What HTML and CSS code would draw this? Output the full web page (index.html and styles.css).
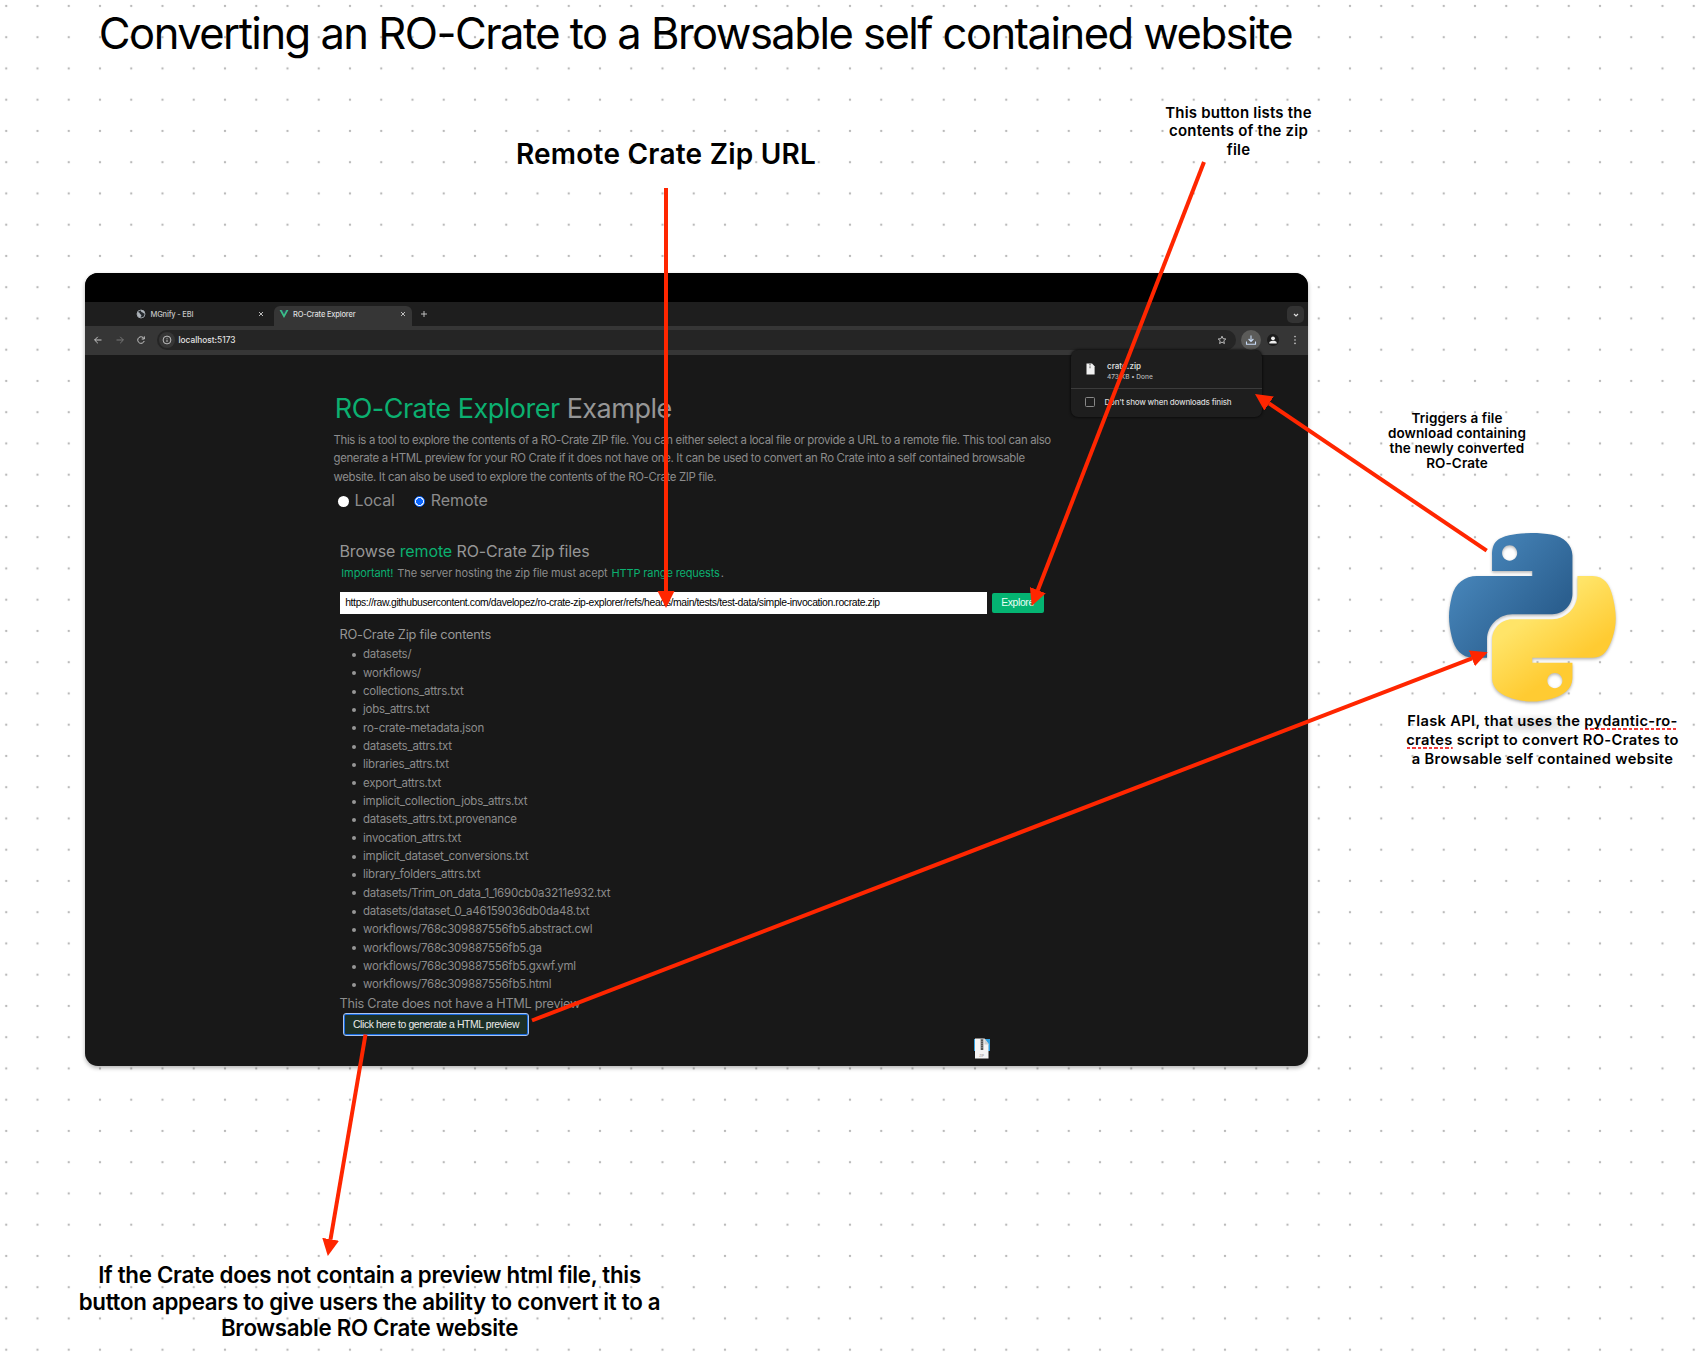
FILE: index.html
```html
<!DOCTYPE html>
<html lang="en">
<head>
<meta charset="utf-8">
<title>Converting an RO-Crate to a Browsable self contained website</title>
<link rel="stylesheet" href="styles.css">
</head>
<body>
<main class="board">
  <h1 class="note title">Converting an RO-Crate to a Browsable self contained website</h1>
  <p class="note note-url">Remote Crate Zip URL</p>
  <p class="note note-list">This button lists the<br>contents of the zip<br>file</p>
  <p class="note note-download">Triggers a file<br>download containing<br>the newly converted<br>RO-Crate</p>

  <section class="window">
    <div class="menubar"></div>
    <div class="tabs">
      <div class="tab">
        <svg class="tab-icon" viewBox="0 0 10 10"><circle cx="5" cy="5" r="4" fill="#25292d" stroke="#aeb4ba" stroke-width=".8"/><path d="M1.200 3.600C2.200 2.800 3.600 3.400 3.800 4.400S5.600 5.200 5.400 6.600 4.200 7.600 4.400 8.900C2.400 8.800.8 6.400 1.200 3.600ZM5.200 1.100C4.400 2 5 3 6 3.200S7.600 4.600 8.900 4.600C8.800 2.600 7.200 1 5.200 1.100Z" fill="#aeb4ba"/></svg>
        <span class="tab-name">MGnify - EBI</span>
        <svg class="close" viewBox="0 0 6 6"><path d="M1 1l4 4M5 1l-4 4"/></svg>
      </div>
      <div class="tab active">
        <svg class="tab-icon" viewBox="0 0 10 10"><path d="M.6 1H4L5 2.700 6 1h3.400L5 9Z" fill="#34495e"/><path d="M.6 1h1.900L5 5.500 7.500 1h1.900L5 9Z" fill="#3cbf85"/></svg>
        <span class="tab-name">RO-Crate Explorer</span>
        <svg class="close" viewBox="0 0 6 6"><path d="M1 1l4 4M5 1l-4 4"/></svg>
      </div>
      <svg class="plus" viewBox="0 0 8 8"><path d="M4 1v6M1 4h6"/></svg>
      <div class="tab-search"><svg viewBox="0 0 8 8"><path d="M2 3l2 2 2-2"/></svg></div>
    </div>
    <div class="toolbar">
      <svg class="nav" viewBox="0 0 10 10"><path d="M8.500 5H1.700M4.800 1.800L1.600 5l3.200 3.200"/></svg>
      <svg class="nav dim" viewBox="0 0 10 10"><path d="M1.500 5h6.800M5.200 1.800L8.400 5 5.200 8.200"/></svg>
      <svg class="nav" viewBox="0 0 10 10"><path d="M8 3.600A3.300 3.300 0 1 0 8.200 6M8.300 1.400v2.600H5.700"/></svg>
      <div class="omnibox">
        <span class="site-info"><svg viewBox="0 0 10 10"><circle cx="5" cy="5" r="3.900"/><path d="M5 4.700v2.300M5 2.900v.9"/></svg></span>
        <span class="address">localhost:5173</span>
        <svg class="star" viewBox="0 0 10 10"><path d="M5 1.200l1.100 2.500 2.700.3-2 1.800.6 2.700L5 7.100 2.600 8.500l.6-2.700-2-1.800 2.700-.3Z"/></svg>
      </div>
      <span class="download"><svg viewBox="0 0 12 12"><path d="M6 1.500v5.700M3.600 5L6 7.400 8.400 5M1.500 7.500v2.700h9V7.500"/></svg></span>
      <svg class="avatar" viewBox="0 0 12 12"><circle cx="6" cy="6" r="6" fill="#1c1c1c"/><circle cx="6" cy="4.300" r="1.900" fill="#eee"/><path d="M2.300 9.600V8.700C2.300 6.200 9.700 6.200 9.700 8.700v.9Z" fill="#eee"/></svg>
      <svg class="menu" viewBox="0 0 4 10"><circle cx="2" cy="1.600" r=".8"/><circle cx="2" cy="5" r=".8"/><circle cx="2" cy="8.400" r=".8"/></svg>
    </div>

    <div class="page">
      <h2 class="heading"><span class="green">RO-Crate Explorer</span> Example</h2>
      <p class="intro">This is a tool to explore the contents of a RO-Crate ZIP file. You can either select a local file or provide a URL to a remote file. This tool can also<br>generate a HTML preview for your RO Crate if it does not have one. It can be used to convert an Ro Crate into a self contained browsable<br>website. It can also be used to explore the contents of the RO-Crate ZIP file.</p>
      <div class="modes">
        <span class="radio"></span><span class="mode-name">Local</span>
        <span class="radio checked"></span><span class="mode-name">Remote</span>
      </div>
      <div class="remote">
        <h3 class="browse">Browse <b class="green">remote</b> RO-Crate Zip files</h3>
        <p class="hint"><b class="green">Important!</b> The server hosting the zip file must acept <b class="green">HTTP range requests</b>.</p>
        <div class="url-row">
          <div class="url">https://raw.githubusercontent.com/davelopez/ro-crate-zip-explorer/refs/heads/main/tests/test-data/simple-invocation.rocrate.zip</div>
          <div class="explore">Explore</div>
        </div>
        <h4 class="contents">RO-Crate Zip file contents</h4>
        <ul class="files">
          <li>datasets/</li>
          <li>workflows/</li>
          <li>collections_attrs.txt</li>
          <li>jobs_attrs.txt</li>
          <li>ro-crate-metadata.json</li>
          <li>datasets_attrs.txt</li>
          <li>libraries_attrs.txt</li>
          <li>export_attrs.txt</li>
          <li>implicit_collection_jobs_attrs.txt</li>
          <li>datasets_attrs.txt.provenance</li>
          <li>invocation_attrs.txt</li>
          <li>implicit_dataset_conversions.txt</li>
          <li>library_folders_attrs.txt</li>
          <li>datasets/Trim_on_data_1_1690cb0a3211e932.txt</li>
          <li>datasets/dataset_0_a46159036db0da48.txt</li>
          <li>workflows/768c309887556fb5.abstract.cwl</li>
          <li>workflows/768c309887556fb5.ga</li>
          <li>workflows/768c309887556fb5.gxwf.yml</li>
          <li>workflows/768c309887556fb5.html</li>
        </ul>
        <p class="no-preview">This Crate does not have a HTML preview</p>
        <div class="generate">Click here to generate a HTML preview</div>
      </div>
    </div>

    <aside class="downloads">
      <div class="download-item">
        <svg class="file-icon" viewBox="0 0 9 12"><path d="M.5.500H6L8.600 3.200V11.500H.5Z" fill="#f1f1f1"/><path d="M4 1v4.500" stroke="#444" stroke-width="1" stroke-dasharray="1 .6"/></svg>
        <div><div class="file-name">crate.zip</div><div class="file-size">473 KB • Done</div></div>
      </div>
      <div class="download-option"><span class="checkbox"></span>Don't show when downloads finish</div>
    </aside>
    <svg class="zip-file" viewBox="0 0 16 21"><path d="M0 1h16v12H0Z" fill="#2f9fe0"/><path d="M1 .5h9.500l4 5.500V20.500H1Z" fill="#f4f4f4"/><path d="M10.500.500v6h4.500Z" fill="#cfcfcf"/><path d="M8 1v11" stroke="#555" stroke-width="2.600"/><path d="M8 1v9" stroke="#aaa" stroke-width="1" stroke-dasharray="1 1"/><text x="5.300" y="18.500" class="zip-label">ZIP</text></svg>
  </section>

  <figure class="python">
    <svg viewBox="0 0 112 128" width="168" height="192">
      <defs>
        <linearGradient id="blue" gradientUnits="userSpaceOnUse" x1="8" y1="8" x2="67" y2="58"><stop offset="0" stop-color="#4b8bc0"/><stop offset="1" stop-color="#2b5f8f"/></linearGradient>
        <linearGradient id="yellow" gradientUnits="userSpaceOnUse" x1="56" y1="54" x2="80" y2="88"><stop offset="0" stop-color="#ffe468"/><stop offset="1" stop-color="#ffcb32"/></linearGradient>
        <radialGradient id="shade"><stop offset="0" stop-color="#000" stop-opacity=".16"/><stop offset="1" stop-color="#000" stop-opacity="0"/></radialGradient>
      </defs>
      <ellipse cx="56" cy="127.500" rx="36" ry="7" fill="url(#shade)"/>
      <g class="snakes">
      <path fill="url(#blue)" d="M54.919 0C50.335.021 45.958.412 42.106 1.094C30.760 3.098 28.700 7.294 28.700 15.031V25.250H55.513V28.656H18.638C10.845 28.656 4.021 33.340 1.888 42.250C-.574 52.460-.683 58.831 1.888 69.500C3.793 77.436 8.343 83.094 16.138 83.094H25.356V70.844C25.356 61.994 33.013 54.188 42.106 54.188H68.888C76.343 54.188 82.294 48.049 82.294 40.563V15.031C82.294 7.765 76.164 2.307 68.888 1.094C64.282.327 59.502-.021 54.919 0ZM40.419 8.219C43.188 8.219 45.450 10.517 45.450 13.344C45.450 16.160 43.188 18.438 40.419 18.438C37.639 18.438 35.388 16.160 35.388 13.344C35.388 10.517 37.639 8.219 40.419 8.219Z"/>
      <path fill="url(#yellow)" d="M85.638 28.656V40.563C85.638 49.793 77.811 57.563 68.888 57.563H42.106C34.770 57.563 28.700 63.841 28.700 71.188V96.719C28.700 103.985 35.018 108.258 42.106 110.344C50.594 112.840 58.733 113.291 68.888 110.344C75.637 108.389 82.294 104.456 82.294 96.719V86.500H55.513V83.094H95.700C103.492 83.094 106.396 77.658 109.106 69.500C111.905 61.100 111.786 53.023 109.106 42.250C107.180 34.493 103.502 28.656 95.700 28.656ZM70.575 93.313C73.354 93.313 75.606 95.590 75.606 98.406C75.606 101.233 73.354 103.531 70.575 103.531C67.805 103.531 65.544 101.233 65.544 98.406C65.544 95.590 67.805 93.313 70.575 93.313Z"/>
      </g>
    </svg>
  </figure>
  <p class="note note-flask">Flask API, that uses the <u>pydantic-ro-</u><br><u>crates</u> script to convert RO-Crates to<br>a Browsable self contained website</p>
  <p class="note note-preview">If the Crate does not contain a preview html file, this<br>button appears to give users the ability to convert it to a<br>Browsable RO Crate website</p>

  <svg class="arrows" viewBox="0 0 1698 1352">
    <defs><marker id="head" markerUnits="userSpaceOnUse" markerWidth="18" markerHeight="18" refX="17" refY="8.500" orient="auto"><path d="M0 0L17 8.500 0 17Z" fill="#ff2600"/></marker></defs>
    <g class="shafts"><path d="M666 188V591"/><path d="M1204 162L1037.700 590.500"/><path d="M1486.700 550.700L1269 403.400"/><path d="M532 1020.500L1472 658.300"/><path d="M365.500 1034.500L330.500 1239.500"/></g>
    <g class="heads"><path d="M666 188V608"/><path d="M1204 162L1031.700 606"/><path d="M1486.700 550.700L1255 394"/><path d="M532 1020.500L1487.700 652.300"/><path d="M365.500 1034.500L327.800 1256"/></g>
  </svg>
</main>
</body>
</html>
```
FILE: styles.css
```css
* { box-sizing: border-box; }
body { margin: 0; font-family: Inter, sans-serif; color: #000; }
h1, h2, h3, h4, p, ul, figure { margin: 0; padding: 0; font-weight: 400; }
b { font-weight: inherit; }
svg { display: block; }

.board {
  position: relative;
  width: 1698px;
  height: 1352px;
  overflow: hidden;
  background: #fff radial-gradient(circle, #b4b4b4 0, #bcbcbc .9px, transparent 1.600px) -9.400px -9.700px / 31.250px 31.250px;
}

/* free-standing labels on the canvas */
.note { position: absolute; text-align: center; white-space: nowrap; font-weight: 600; transform: translateX(-50%); }
.title { left: 695.500px; top: 3px; font-size: 43.500px; line-height: 60px; font-weight: 400; letter-spacing: -1.520px; }
.note-url { left: 666px; top: 134px; font-size: 28px; line-height: 40px; letter-spacing: .230px; }
.note-list { left: 1238.500px; top: 103.500px; font-size: 15px; line-height: 18.600px; letter-spacing: .200px; }
.note-download { left: 1457px; top: 411px; font-size: 13.500px; line-height: 15px; letter-spacing: .080px; }
.note-flask { left: 1542.500px; top: 712.400px; font-size: 14.700px; line-height: 19px; letter-spacing: .320px; }
.note-preview { left: 369.500px; top: 1262.400px; font-size: 22.300px; line-height: 26.400px; letter-spacing: -.290px; }
.note-flask u { text-decoration: none; background: repeating-linear-gradient(90deg, #f23b3b 0 3.700px, transparent 3.700px 5.500px) 0 100% / 100% 2px no-repeat; }

.window {
  position: absolute;
  left: 85px;
  top: 273px;
  width: 1223px;
  height: 793px;
  border-radius: 13px;
  overflow: hidden;
  background: #181818;
  color: #969696;
  box-shadow: 0 2px 4px rgba(0, 0, 0, .3);
}
.menubar { height: 29px; background: #000; }
.tabs { display: flex; height: 24px; background: #1e1e1e; color: #c4c4c4; font-size: 7.500px; letter-spacing: -.180px; align-items: flex-end; padding-left: 42px; }
.tab { display: flex; align-items: center; width: 147px; height: 20px; padding: 0 10.500px 3.500px 9px; }
.tab.active { width: 138px; padding: 0 6.300px 3.500px 4.500px; border-radius: 6px 6px 0 0; background: #363636; color: #dedede; }
.tab-icon { width: 10px; height: 10px; margin-right: 4.500px; }
.tab-name { flex: 1; font-weight: 500; }
.close { width: 6px; height: 6px; stroke: #ccc; stroke-width: .9; fill: none; }
.plus { width: 8px; height: 8px; margin: 0 0 8px 8px; stroke: #ccc; stroke-width: .9; }
.tab-search { width: 17px; height: 17px; margin: 0 4px 3px auto; border-radius: 5px; background: #333; display: grid; place-items: center; }
.tab-search svg { width: 8px; stroke: #ddd; fill: none; stroke-width: 1.200; }

.toolbar { display: flex; align-items: center; height: 28.500px; padding: 0 11.500px 1px 8px; background: #363636; }
.nav { width: 10px; height: 10px; margin-right: 11.500px; fill: none; stroke: #c6c6c6; stroke-width: 1; }
.nav.dim { stroke: #777; }
.omnibox { display: flex; align-items: center; width: 1079px; height: 20px; margin-left: -1px; padding: 0 9px 0 2px; border-radius: 10px; background: #252525; color: #e2e2e2; font-size: 8.300px; }
.site-info { display: grid; place-items: center; width: 16px; height: 16px; border-radius: 50%; background: #363636; }
.site-info svg { width: 10px; fill: none; stroke: #ccc; stroke-width: .9; }
.address { flex: 1; margin-left: 4px; font-weight: 500; }
.star { width: 10px; height: 10px; fill: none; stroke: #ccc; stroke-width: .9; }
.download { display: grid; place-items: center; width: 20px; height: 20px; margin-left: 5.500px; border-radius: 50%; background: #5b5b59; }
.download svg { width: 12px; fill: none; stroke: #c9dcf8; stroke-width: 1.100; }
.avatar { width: 12px; height: 12px; margin-left: 5.500px; }
.menu { width: 4px; height: 10px; margin-left: auto; fill: #ccc; }

.page { padding: 34.500px 0 0 249px; }
.green { color: #0bb070; }
.heading { padding-left: .8px; font-size: 27px; line-height: 40px; font-weight: 400; letter-spacing: -.500px; white-space: nowrap; }
.intro { margin-top: 2px; margin-left: -.5px; font-size: 11.400px; line-height: 18.300px; letter-spacing: -.330px; white-space: nowrap; color: #8c8c8c; }
.modes { display: flex; align-items: center; height: 20px; margin-top: 4.500px; padding-left: 3.500px; font-size: 16px; letter-spacing: -.100px; color: #8c8c8c; }
.radio { width: 11px; height: 11px; margin-top: 2px; border-radius: 50%; background: #fff; }
.radio.checked { margin-left: 19px; background: radial-gradient(circle, #0a66ff 3.200px, #fff 3.700px); border: 1px solid #0a66ff; }
.mode-name { margin-left: 6px; }
.remote { padding: 30.500px 0 0 5.500px; white-space: nowrap; }
.browse { font-size: 16px; line-height: 20px; letter-spacing: -.110px; }
.hint { margin-top: 4px; padding-left: .8px; font-size: 11px; line-height: 16px; letter-spacing: -.130px; color: #8c8c8c; }
.hint .green { margin: 0 1px; }
.url-row { display: flex; align-items: center; gap: 5px; margin-top: 11px; font-family: "Liberation Sans", sans-serif; font-size: 10.400px; letter-spacing: -.370px; }
.url { width: 647px; height: 22px; padding-left: 5.700px; line-height: 22px; background: #fff; color: #000; }
.explore { width: 52px; height: 20px; border-radius: 2px; background: #04b472; color: #e8fff6; text-align: center; line-height: 20px; }
.contents { margin-top: 11.700px; font-size: 12.800px; line-height: 18px; letter-spacing: -.230px; }
.files { margin-top: 1.900px; padding-left: 23.500px; list-style: none; font-size: 11.500px; line-height: 18.330px; letter-spacing: -.230px; color: #8c8c8c; }
.files li { position: relative; }
.files li::before { content: ""; position: absolute; left: -11px; top: 7.500px; width: 4px; height: 4px; border-radius: 50%; background: #969696; }
.no-preview { margin-top: 1.700px; font-size: 12.700px; line-height: 17.500px; letter-spacing: -.270px; color: #8c8c8c; }
.generate { width: 186px; height: 23px; margin: 0 0 0 3.500px; border-radius: 3px; border: 1px solid #a9c4ef; box-shadow: inset 0 0 0 1px #1769dd; background: #1c3027; color: #ececec; font: 10.400px/21px "Liberation Sans", sans-serif; letter-spacing: -.370px; text-align: center; }

.downloads { position: absolute; left: 986px; top: 77px; width: 191px; height: 67px; border-radius: 7px; background: #1e1e1e; box-shadow: 0 0 3px #000; color: #d8d8d8; }
.download-item { display: flex; height: 39px; padding: 11.500px 0 0 15px; border-bottom: 1px solid #3c3c3c; }
.file-icon { width: 9px; height: 12px; margin: 1px 12px 0 0; }
.file-name { font-size: 8px; line-height: 9px; font-weight: 600; }
.file-size { font-size: 6.500px; line-height: 12px; font-weight: 500; color: #b8b8b8; }
.download-option { display: flex; align-items: center; height: 26px; padding-left: 14px; font-size: 8px; font-weight: 500; letter-spacing: -.200px; }
.checkbox { width: 10px; height: 10px; margin-right: 9.500px; border: 1px solid #888; border-radius: 1.500px; }
.zip-file { position: absolute; left: 889px; top: 765px; width: 16px; height: 21px; }
.zip-label { font: 3px Inter, sans-serif; fill: #888; }

.python { position: absolute; left: 1449.300px; top: 533px; }
.python svg { overflow: visible; }
.snakes { filter: drop-shadow(.5px 1.500px 1px rgba(0, 0, 0, .3)); }

.arrows { position: absolute; inset: 0; width: 1698px; height: 1352px; fill: none; }
.shafts { stroke: #ff2600; stroke-width: 4; }
.heads { stroke: none; }
.heads path { marker-end: url(#head); }
```
